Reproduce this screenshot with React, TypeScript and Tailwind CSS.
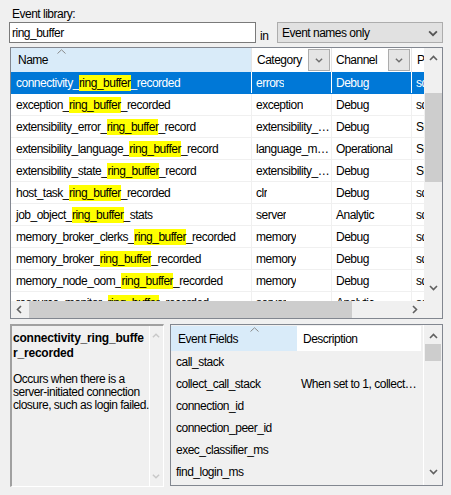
import React from 'react'

const rows = [
    { pre: 'connectivity_', post: '_recorded', category: 'errors', channel: 'Debug', pkg: 'sqlserver' },
    { pre: 'exception_', post: '_recorded', category: 'exception', channel: 'Debug', pkg: 'sqlserver' },
    { pre: 'extensibility_error_', post: '_record', category: 'extensibility_events', channel: 'Debug', pkg: 'SQLSatellite' },
    { pre: 'extensibility_language_', post: '_record', category: 'language_management', channel: 'Operational', pkg: 'SQLSatellite' },
    { pre: 'extensibility_state_', post: '_record', category: 'extensibility_state', channel: 'Debug', pkg: 'SQLSatellite' },
    { pre: 'host_task_', post: '_recorded', category: 'clr', channel: 'Debug', pkg: 'sqlserver' },
    { pre: 'job_object_', post: '_stats', category: 'server', channel: 'Analytic', pkg: 'sqlserver' },
    { pre: 'memory_broker_clerks_', post: '_recorded', category: 'memory', channel: 'Debug', pkg: 'sqlserver' },
    { pre: 'memory_broker_', post: '_recorded', category: 'memory', channel: 'Debug', pkg: 'sqlserver' },
    { pre: 'memory_node_oom_', post: '_recorded', category: 'memory', channel: 'Debug', pkg: 'sqlserver' },
    { pre: 'resource_monitor_', post: '_recorded', category: 'server', channel: 'Analytic', pkg: 'sqlserver' },
]

const fields = [
    { name: 'call_stack', desc: '' },
    { name: 'collect_call_stack', desc: 'When set to 1, collect_call_stack' },
    { name: 'connection_id', desc: '' },
    { name: 'connection_peer_id', desc: '' },
    { name: 'exec_classifier_ms', desc: '' },
    { name: 'find_login_ms', desc: '' },
]

function Chevron({ dir, color = '#606060', size = 9 }: { dir: 'up' | 'down' | 'left' | 'right'; color?: string; size?: number }) {
    const paths: Record<string, string> = {
        up: 'M1 6 L4.5 2.5 L8 6',
        down: 'M1 3 L4.5 6.5 L8 3',
        left: 'M6 1 L2.5 4.5 L6 8',
        right: 'M3 1 L6.5 4.5 L3 8',
    }
    return (
        <svg width={size} height={size} viewBox="0 0 9 9">
            <path d={paths[dir]} fill="none" stroke={color} strokeWidth="1.6" />
        </svg>
    )
}

function SortCaret() {
    return (
        <svg width="9" height="5" viewBox="0 0 9 5" className="absolute top-[1px]">
            <path d="M0.5 4.5 L4.5 0.8 L8.5 4.5" fill="none" stroke="#8a8a8a" strokeWidth="1" />
        </svg>
    )
}

function DropButton() {
    return (
        <div className="w-[22px] h-[22px] shrink-0 bg-[#e5e5e5] border border-[#acacac] flex items-center justify-center">
            <Chevron dir="down" color="#707070" size={8} />
        </div>
    )
}

export default function App() {
    return (
        <div
            className="w-[451px] h-[495px] bg-[#f0f0f0] overflow-hidden text-[12px] tracking-[-0.5px] text-black leading-none"
            style={{ fontFamily: '"Segoe UI", "Liberation Sans", Arial, sans-serif' }}
        >
            <div className="pl-[12px] pt-[8px] h-[22px]">Event library:</div>

            <div className="flex items-center pl-[9px] h-[21px]">
                <div className="w-[247px] h-[21px] bg-white border border-[#7a7a7a] flex items-center pl-[2px]">
                    ring_buffer
                </div>
                <div className="w-[21px] pl-[4px] pt-[6px]">in</div>
                <div className="w-[166px] h-[21px] bg-[#e1e1e1] border border-[#adadad] flex items-center justify-between pl-[4px] pr-[4px]">
                    <span>Event names only</span>
                    <Chevron dir="down" color="#555" size={10} />
                </div>
            </div>

            {/* events grid */}
            <div className="ml-[10px] mt-[4px] w-[433px] h-[272px] border border-[#828790] bg-white flex">
                <div className="w-[413px] flex flex-col">
                    <div className="h-[24px] flex shrink-0">
                        <div className="w-[241px] bg-[#d9ebf9] border-r border-[#e5e5e5] relative flex items-center pl-[7px]">
                            <div className="absolute left-[46px] top-0">
                                <SortCaret />
                            </div>
                            Name
                        </div>
                        <div className="w-[80px] border-r border-[#e5e5e5] flex items-center justify-between pl-[5px] pr-[1px]">
                            Category
                            <DropButton />
                        </div>
                        <div className="w-[80px] border-r border-[#e5e5e5] flex items-center justify-between pl-[4px] pr-[1px]">
                            Channel
                            <DropButton />
                        </div>
                        <div className="flex-1 flex items-center pl-[5px] overflow-hidden">Package</div>
                    </div>
                    <div className="h-[229px] overflow-hidden">
                        {rows.map((r, i) => {
                            const sel = i === 0
                            const line = sel ? 'border-white' : 'border-[#f0f0f0]'
                            return (
                                <div
                                    key={i}
                                    className={`h-[22px] flex border-b ${sel ? 'bg-[#0078d7] text-white border-[#0078d7]' : 'border-[#f0f0f0]'}`}
                                >
                                    <div className={`w-[241px] border-r ${line} flex items-center pl-[5px] whitespace-nowrap`}>
                                        {r.pre}
                                        <span className="bg-[#ffff00] text-black py-[2px]">ring_buffer</span>
                                        {r.post}
                                    </div>
                                    <div className={`w-[80px] border-r ${line} flex items-center pl-[4px] pr-[1px] whitespace-nowrap overflow-hidden`}>
                                        <span className="truncate leading-[16px]">{r.category}</span>
                                    </div>
                                    <div className={`w-[80px] border-r ${line} flex items-center pl-[4px] whitespace-nowrap overflow-hidden`}>
                                        {r.channel}
                                    </div>
                                    <div className="flex-1 flex items-center pl-[4px] whitespace-nowrap overflow-hidden">{r.pkg}</div>
                                </div>
                            )
                        })}
                    </div>
                    <div className="h-[17px] bg-[#f0f0f0] flex items-center shrink-0">
                        <div className="w-[17px] flex justify-center">
                            <Chevron dir="left" />
                        </div>
                        <div className="w-[323px] h-[17px] bg-[#cdcdcd] ml-[1px]" />
                        <div className="flex-1 flex justify-end pr-[5px]">
                            <Chevron dir="right" />
                        </div>
                    </div>
                </div>
                <div className="w-[18px] bg-[#f0f0f0] flex flex-col">
                    <div className="h-[253px] flex flex-col items-center">
                        <div className="h-[20px] flex items-center pt-[1px]">
                            <Chevron dir="up" />
                        </div>
                        <div className="w-[17px] h-[89px] bg-[#cdcdcd] mt-[25px]" />
                        <div className="flex-1" />
                        <div className="h-[18px] flex items-start">
                            <Chevron dir="down" />
                        </div>
                    </div>
                </div>
            </div>

            {/* bottom panes */}
            <div className="flex pl-[10px] mt-[5px]">
                <div className="w-[154px] h-[163px] border-t-2 border-l-2 border-[#a0a0a0] border-b border-r border-b-white border-r-white flex">
                    <div className="flex-1 pl-[1px] pt-[5px] whitespace-nowrap">
                        <div className="font-bold text-[12px] leading-[15px] tracking-[-0.2px]">
                            connectivity_ring_buffe
                            <br />
                            r_recorded
                        </div>
                        <div className="mt-[12px] leading-[13px]">
                            Occurs when there is a
                            <br />
                            server-initiated connection
                            <br />
                            closure, such as login failed.
                        </div>
                    </div>
                    <div className="w-[15px] border-l border-white flex flex-col items-center justify-between py-[6px]">
                        <Chevron dir="up" color="#c8c8c8" size={8} />
                        <Chevron dir="down" color="#c8c8c8" size={8} />
                    </div>
                </div>

                <div className="ml-[6px] w-[273px] h-[162px] border border-[#828790] bg-[#f0f0f0] flex">
                    <div className="w-[252px] flex flex-col">
                        <div className="h-[25px] flex shrink-0 mt-[1px]">
                            <div className="w-[126px] bg-[#d9ebf9] relative flex items-center pl-[7px]">
                                <div className="absolute left-[79px] top-0">
                                    <SortCaret />
                                </div>
                                Event Fields
                            </div>
                            <div className="w-[124px] bg-white flex items-center pl-[6px]">Description</div>
                        </div>
                        {fields.map((f) => (
                            <div key={f.name} className="h-[22px] flex items-center">
                                <div className="w-[126px] pl-[5px] whitespace-nowrap">{f.name}</div>
                                <div className="w-[124px] pl-[4px] leading-[16px] whitespace-nowrap overflow-hidden text-ellipsis">{f.desc}</div>
                            </div>
                        ))}
                    </div>
                    <div className="flex-1 border-l border-white flex flex-col items-center">
                        <div className="h-[19px] flex items-center pt-[3px]">
                            <Chevron dir="up" />
                        </div>
                        <div className="w-[16px] h-[17px] bg-[#cdcdcd]" />
                        <div className="flex-1" />
                        <div className="h-[18px] flex items-start">
                            <Chevron dir="down" />
                        </div>
                    </div>
                </div>
            </div>
        </div>
    )
}
